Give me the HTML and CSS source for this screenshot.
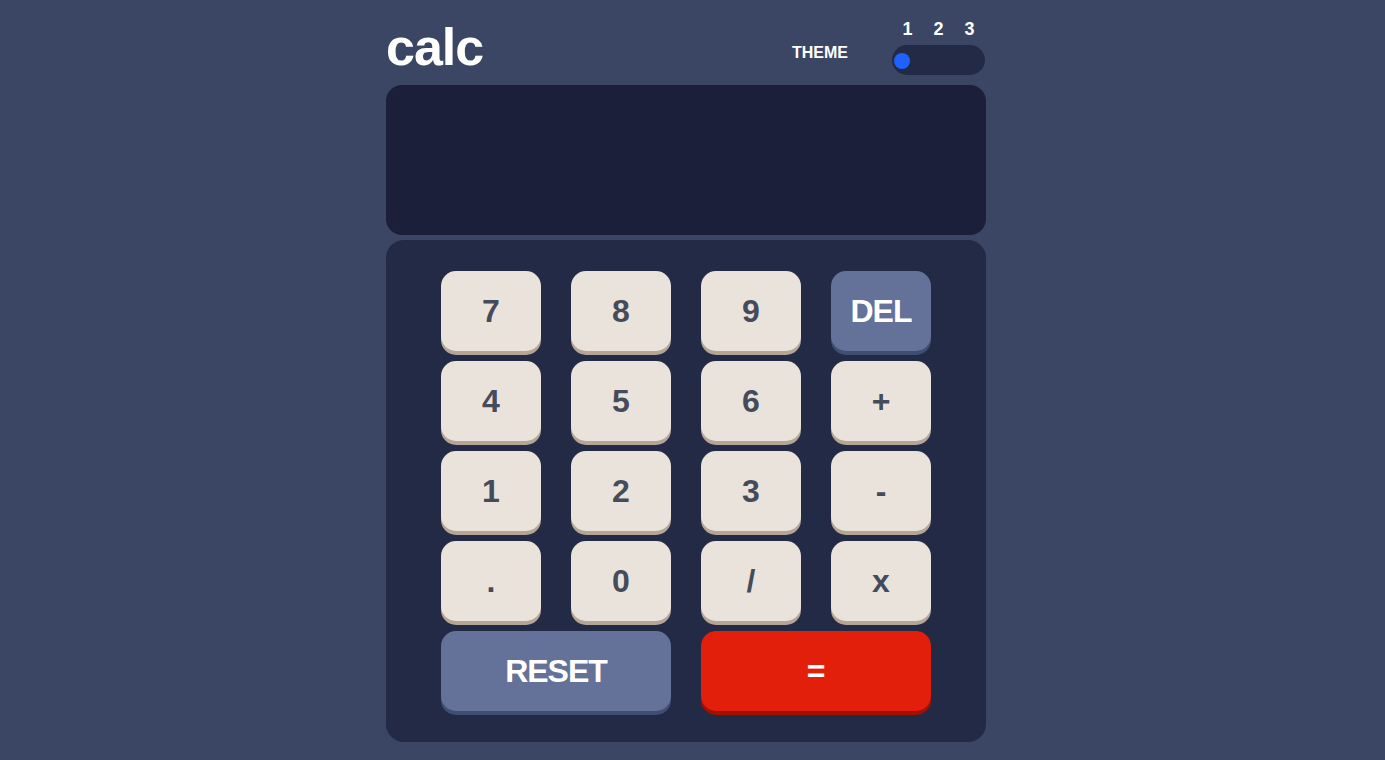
FILE: index.html
```html
<!DOCTYPE html>
<html lang="en">
<head>
<meta charset="utf-8">
<title>calc</title>
<link rel="stylesheet" href="styles.css">
</head>
<body>
<main class="calc">
  <header class="header">
    <h1 class="title">calc</h1>
    <div class="theme">
      <span class="theme-label">THEME</span>
      <div class="switch">
        <div class="switch-nums"><span>1</span><span>2</span><span>3</span></div>
        <div class="switch-track"><span class="switch-dot"></span></div>
      </div>
    </div>
  </header>
  <section class="display"></section>
  <section class="keypad">
    <button class="key">7</button>
    <button class="key">8</button>
    <button class="key">9</button>
    <button class="key key-alt">DEL</button>
    <button class="key">4</button>
    <button class="key">5</button>
    <button class="key">6</button>
    <button class="key">+</button>
    <button class="key">1</button>
    <button class="key">2</button>
    <button class="key">3</button>
    <button class="key">-</button>
    <button class="key">.</button>
    <button class="key">0</button>
    <button class="key">/</button>
    <button class="key">x</button>
    <button class="key key-alt key-wide">RESET</button>
    <button class="key key-eq key-wide">=</button>
  </section>
</main>
</body>
</html>
```
FILE: styles.css
```css
* { box-sizing: border-box; }
html, body { margin: 0; }
body {
  background: #3a4664;
  font-family: "Liberation Sans", Arial, sans-serif;
  font-weight: 700;
  color: #fff;
  padding: 19px 13px 0 0;
  min-height: 760px;
}
.calc {
  width: 600px;
  margin: 0 auto;
}
.header {
  display: flex;
  justify-content: space-between;
  align-items: flex-end;
  margin-bottom: 10px;
}
.title {
  margin: 0;
  font-size: 52px;
  line-height: 56px;
  letter-spacing: -1px;
  font-weight: 700;
}
.theme {
  display: flex;
  align-items: flex-end;
  gap: 44px;
  margin-right: 1px;
}
.theme-label {
  font-size: 16px;
  line-height: 16px;
  margin-bottom: 14px;
}
.switch {
  width: 93px;
  display: flex;
  flex-direction: column;
  gap: 6px;
}
.switch-nums {
  display: grid;
  grid-template-columns: repeat(3, 1fr);
  text-align: center;
  font-size: 18px;
  line-height: 20px;
}
.switch-track {
  height: 30px;
  border-radius: 15px;
  background: #232a45;
  display: flex;
  align-items: center;
  padding-left: 2px;
}
.switch-dot {
  width: 16px;
  height: 16px;
  border-radius: 50%;
  background: #1d62ff;
  margin-top: 2px;
}
.display {
  height: 150px;
  border-radius: 16px;
  background: #1b1f3a;
  margin-bottom: 5px;
}
.keypad {
  background: #232a45;
  border-radius: 18px;
  padding: 31px 55px;
  display: grid;
  grid-template-columns: repeat(4, 100px);
  grid-auto-rows: 80px;
  column-gap: 30px;
  row-gap: 10px;
}
.key {
  border: 0;
  border-radius: 15px;
  background: #eae3dc;
  box-shadow: 0 4px 0 #b4a597;
  color: #444b5a;
  font-family: "Liberation Sans", Arial, sans-serif;
  font-weight: 700;
  font-size: 32px;
  line-height: 80px;
  padding: 0;
  display: flex;
  align-items: center;
  justify-content: center;
  cursor: pointer;
}
.key-alt {
  background: #647198;
  box-shadow: 0 4px 0 #414e73;
  color: #fff;
  letter-spacing: -1px;
}
.key-eq {
  background: #e21f0b;
  box-shadow: 0 4px 0 #a21100;
  color: #fff;
}
.key-wide {
  grid-column: span 2;
}
```
